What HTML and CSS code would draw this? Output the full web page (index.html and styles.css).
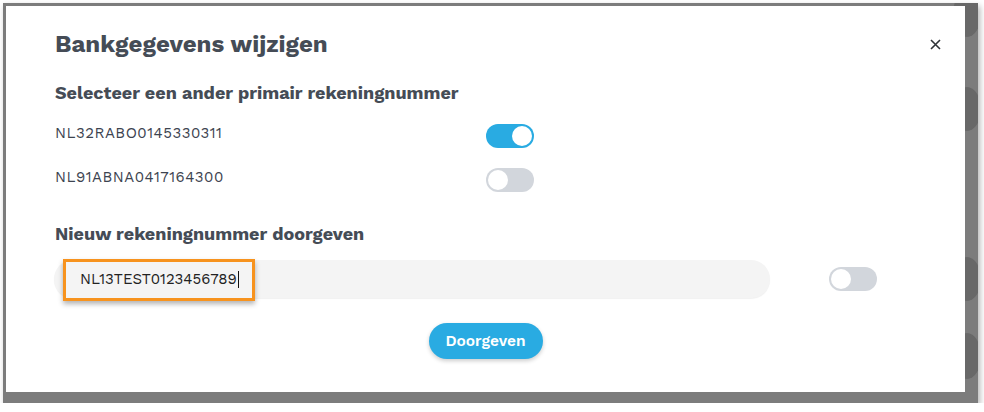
FILE: index.html
```html
<!DOCTYPE html>
<html lang="nl">
<head>
    <meta charset="UTF-8">
    <meta name="viewport" content="width=device-width, initial-scale=1.0">
    <title>Bankgegevens wijzigen</title>
    <link rel="stylesheet" href="styles.css">
</head>
<body>
    <div class="frame">
        <span class="blob blob-1"></span>
        <span class="blob blob-2"></span>
        <span class="blob blob-3"></span>
        <span class="blob blob-4"></span>

        <div class="modal">
            <div class="modal-header">
                <h1>Bankgegevens wijzigen</h1>
                <button class="close" aria-label="Sluiten">
                    <svg width="11" height="11" viewBox="0 0 11 11">
                        <path d="M1 1 L10 10 M10 1 L1 10" stroke="#2f3338" stroke-width="1.6" fill="none"/>
                    </svg>
                </button>
            </div>

            <h2 class="first">Selecteer een ander primair rekeningnummer</h2>
            <div class="account-row">
                <span class="iban">NL32RABO0145330311</span>
                <span class="toggle on"><span class="knob"></span></span>
            </div>
            <div class="account-row second">
                <span class="iban">NL91ABNA0417164300</span>
                <span class="toggle"><span class="knob"></span></span>
            </div>

            <h2 class="new">Nieuw rekeningnummer doorgeven</h2>
            <div class="new-row">
                <div class="input">
                    <span class="value">NL13TEST0123456789</span><span class="caret"></span>
                    <span class="highlight"></span>
                </div>
                <span class="toggle"><span class="knob"></span></span>
            </div>

            <div class="actions">
                <button class="submit">Doorgeven</button>
            </div>
        </div>
    </div>
</body>
</html>
```

FILE: styles.css
```css
body {
    margin: 0;
    background: #fff;
    font-family: "Work Sans", Inter, "Open Sans", sans-serif;
    color: #3f4650;
}
.frame {
    position: relative;
    margin: 3px 0 0 3px;
    width: 975px;
    height: 400px;
    padding: 3px 0 0 3px;
    box-sizing: border-box;
    background: #7c7c7c;
    box-shadow: 2px 3px 6px rgba(0, 0, 0, 0.3);
    overflow: hidden;
}
.blob {
    position: absolute;
    left: 950px;
    width: 28px;
    border-radius: 50%;
    background: #686868;
}
.blob-1 { top: -12px; height: 46px; }
.blob-2 { top: 84px; height: 44px; }
.blob-3 { top: 254px; height: 44px; }
.blob-4 { top: 330px; height: 46px; }
.modal {
    position: relative;
    width: 959px;
    height: 386px;
    background: #fff;
    padding: 24px 24px 0 49px;
    box-sizing: border-box;
}
.modal-header {
    display: flex;
    justify-content: space-between;
    align-items: center;
    height: 28px;
}
h1 {
    margin: 0;
    font-size: 24px;
    line-height: 28px;
    font-weight: 700;
    color: #454c56;
}
.close {
    border: none;
    background: none;
    padding: 0;
    width: 11px;
    height: 11px;
    display: flex;
}
h2 {
    margin: 0;
    font-size: 18px;
    line-height: 24px;
    font-weight: 700;
    color: #454c56;
}
h2.first {
    margin-top: 23px;
}
h2.new {
    margin-top: 30px;
}
.account-row {
    display: flex;
    align-items: center;
    height: 24px;
    margin-top: 19px;
}
.account-row.second {
    margin-top: 20px;
}
.iban {
    width: 431px;
    font-size: 15px;
    letter-spacing: 0.5px;
    color: #3d4450;
    margin-top: -6px;
}
.toggle {
    position: relative;
    width: 48px;
    height: 24px;
    border-radius: 12px;
    background: #d2d6dc;
    flex-shrink: 0;
}
.toggle.on {
    background: #29abe2;
}
.knob {
    position: absolute;
    top: 2px;
    left: 2px;
    width: 20px;
    height: 20px;
    border-radius: 50%;
    background: #fff;
}
.toggle.on .knob {
    left: 26px;
}
.new-row {
    display: flex;
    align-items: center;
    gap: 59px;
    margin-top: 14px;
    margin-left: -1px;
}
.input {
    position: relative;
    width: 716px;
    height: 38px;
    border-radius: 19px;
    background: #f4f4f4;
    box-shadow: 0 1px 1px rgba(0, 0, 0, 0.06);
    display: flex;
    align-items: center;
    padding-left: 26px;
    box-sizing: border-box;
    font-size: 15px;
    color: #222;
}
.caret {
    display: inline-block;
    width: 1px;
    height: 17px;
    background: #111;
    margin-left: 1px;
}
.highlight {
    position: absolute;
    left: 9px;
    top: -1px;
    width: 192px;
    height: 42px;
    border: 3px solid #f7931e;
    box-sizing: border-box;
    box-shadow: 0 3px 5px rgba(0, 0, 0, 0.3);
}
.actions {
    display: flex;
    justify-content: center;
    margin: 25px -24px 0 -49px;
}
.submit {
    width: 114px;
    height: 36px;
    border: none;
    border-radius: 18px;
    background: #29abe2;
    color: #fff;
    font-family: inherit;
    font-size: 15.5px;
    font-weight: 600;
    box-shadow: 0 2px 4px rgba(0, 0, 0, 0.2);
}
```
